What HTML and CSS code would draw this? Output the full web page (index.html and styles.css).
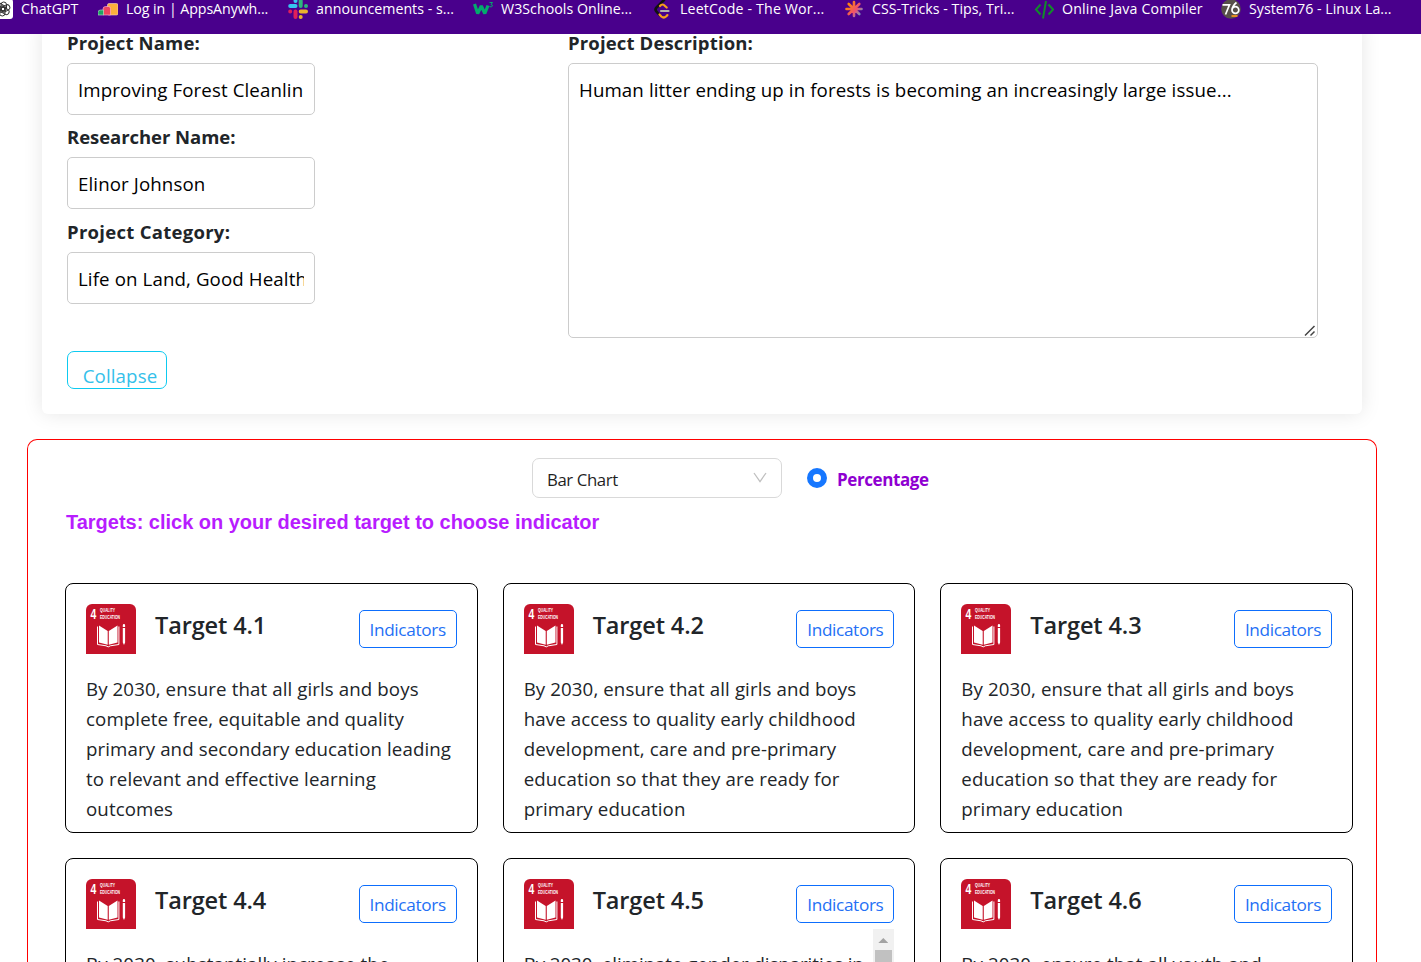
FILE: index.html
```html
<!DOCTYPE html>
<html lang="en">
<head>
<meta charset="utf-8">
<title>Project Targets</title>
<link rel="stylesheet" href="styles.css">
</head>
<body>
<svg class="defs" width="0" height="0" aria-hidden="true">
  <symbol id="sdg4" viewBox="0 0 50 50">
    <path fill="#c5132a" d="M0 50V6a6 6 0 0 1 6-6h38a6 6 0 0 1 6 6v44z"/>
    <text x="4.600" y="14.600" font-size="14.500" font-weight="700" fill="#fff" textLength="5.800" lengthAdjust="spacingAndGlyphs">4</text>
    <text x="14" y="8.300" font-size="6.200" font-weight="700" fill="#fff" textLength="15" lengthAdjust="spacingAndGlyphs">QUALITY</text>
    <text x="14" y="14.500" font-size="6.200" font-weight="700" fill="#fff" textLength="20" lengthAdjust="spacingAndGlyphs">EDUCATION</text>
    <path fill="#fff" d="M13 21.500l8.700 5.500v13.700l-8.700-2.200zM31.500 21.500L22.800 27v13.700l8.700-2.200z"/>
    <path fill="none" stroke="#fff" stroke-width="1" d="M11.500 22.500v18l8.500 1.300 2.200 1.100 2.200-1.100 8.500-1.300v-18"/>
    <path fill="#fff" d="M36.800 24h2.300v14.500l-1.100 2.500-1.200-2.500zM36.800 21.200a1.100 1.100 0 0 1 2.300 0V23h-2.300z"/>
  </symbol>
</svg>

<nav class="bookmarks">
  <a class="bookmark"><svg class="fav" viewBox="0 0 20 20"><rect y="-1" width="20" height="20" rx="3" fill="#fff"/><g fill="none" stroke="#333" stroke-width="1"><rect id="petal" x="8" y="2" width="5.500" height="9" rx="2.700"/><use href="#petal" transform="rotate(60 10 9)"/><use href="#petal" transform="rotate(120 10 9)"/><use href="#petal" transform="rotate(180 10 9)"/><use href="#petal" transform="rotate(240 10 9)"/><use href="#petal" transform="rotate(300 10 9)"/></g></svg><span class="w57">ChatGPT</span></a>
  <a class="bookmark"><svg class="fav" viewBox="0 0 20 20"><rect x="9.500" y="3.500" width="10.500" height="11.500" rx="1.500" fill="#fbb03b" stroke="#f8d9c5" stroke-width=".6"/><path d="M5 15V9q0-2.500 2.500-2.500h3q2 0 2 2V15z" fill="#f0455f" stroke="#fbd" stroke-width=".6"/><path d="M0 15v-2.500Q0 10 2.500 10h3v5z" fill="#1fa463" stroke="#bde5cc" stroke-width=".6"/></svg><span class="w142 narrow">Log in | AppsAnywh...</span></a>
  <a class="bookmark"><svg class="fav" viewBox="0 0 20 20"><g stroke-width="4" stroke-linecap="round"><path stroke="#36c5f0" d="M2.200 6h5.300M7.500 1v.01"/><path stroke="#2eb67d" d="M12.700 1v5M18 6v.01"/><path stroke="#ecb22e" d="M12.700 11.500H18M12.700 17v.01"/><path stroke="#e01e5a" d="M7.500 11.500V17M2.200 11.500v.01"/></g></svg><span class="w137">announcements - s...</span></a>
  <a class="bookmark"><svg class="fav" viewBox="0 0 20 20"><path fill="none" stroke="#04aa6d" stroke-width="3.200" stroke-linejoin="bevel" d="M1.500 4l3.200 9.500 3.600-7.500 3.500 7.500 3.200-8"/><path fill="none" stroke="#04aa6d" d="M16.500 2.500h3l-1.500 2q2 .3 1.300 1.700-.8 1.200-2.800.4"/></svg><span class="w131">W3Schools Online...</span></a>
  <a class="bookmark"><svg class="fav" viewBox="0 0 20 20"><path fill="none" stroke="#111" stroke-width="2.600" stroke-linecap="round" d="M12 0L4.500 7.500q-2 2 0 4.200l3 3.300"/><path fill="none" stroke="#f89f1b" stroke-width="2.200" stroke-linecap="round" d="M8 6q2.500-3 5 0l1.700 1.500M7.500 14.500l1.800 2q2.500 2 4.700 0l1.400-1.400"/><path stroke="#b3b1b0" stroke-width="2.200" stroke-linecap="round" d="M9 11h7.500"/></svg><span class="w143 roomy">LeetCode - The Wor...</span></a>
  <a class="bookmark"><svg class="fav" viewBox="0 0 20 20"><defs><linearGradient id="star" gradientUnits="userSpaceOnUse" x1="3" y1="4" x2="18" y2="16"><stop stop-color="#ff8a00"/><stop offset=".55" stop-color="#f0506e"/><stop offset="1" stop-color="#4aa8d8"/></linearGradient></defs><path fill="none" stroke="url(#star)" stroke-width="2.600" stroke-linecap="round" d="M10 2v14M2.500 9.010L17.500 9M4.700 4l10.600 10M15.300 4L4.700 14"/></svg><span class="w142">CSS-Tricks - Tips, Tri...</span></a>
  <a class="bookmark"><svg class="fav" viewBox="0 0 20 20"><path fill="none" stroke="#128a2c" stroke-width="2" d="M6.500 4.500L2 9.500l4.500 5M14.500 4.500l4.500 5-4.500 5M12 1L9 18.500"/></svg><span class="w139 roomy">Online Java Compiler</span></a>
  <a class="bookmark"><svg class="fav" viewBox="0 0 20 20"><circle cx="10" cy="9" r="9.800" fill="#574f4a"/><path stroke="#f7941d" stroke-width="1.800" d="M10.500 16h6"/><path fill="none" stroke="#fff" stroke-width="1.700" d="M1.500 4.800h7L4.500 14.500M15.500 2.500q-4 3-4.500 7.500M17.800 10a3.400 3.400 0 1 1-6.800 0a3.400 3.400 0 1 1 6.800 0"/></svg><span class="w142">System76 - Linux La...</span></a>
</nav>

<section class="panel">
  <div class="fields">
    <div class="field"><label class="label">Project Name:</label><div class="input"><span class="clip">Improving Forest Cleanlin</span></div></div>
    <div class="field"><label class="label tight">Researcher Name:</label><div class="input"><span class="clip">Elinor Johnson</span></div></div>
    <div class="field last"><label class="label wide">Project Category:</label><div class="input"><span class="clip">Life on Land, Good Health</span></div></div>
    <button class="collapse">Collapse</button>
  </div>
  <div class="field">
    <label class="label">Project Description:</label>
    <div class="textarea">Human litter ending up in forests is becoming an increasingly large issue...
      <svg class="grip" viewBox="0 0 12 12"><path stroke="#444" stroke-width="1.500" d="M1 10.500L10.500 1M6.500 10.500L10.500 6.500"/></svg>
    </div>
  </div>
</section>

<section class="results">
  <div class="controls">
    <div class="select"><span>Bar Chart</span><svg class="chevron" viewBox="0 0 14 12"><path fill="none" stroke="#bfbfbf" stroke-width="1.300" d="M1 1l6 8.500L13 1"/></svg></div>
    <span class="radio"></span><span class="percentage">Percentage</span>
  </div>
  <h2 class="heading">Targets: click on your desired target to choose indicator</h2>
  <div class="cards">
    <article class="card"><header class="card-head"><svg class="sdg"><use href="#sdg4"/></svg><h3>Target 4.1</h3><button class="indicators">Indicators</button></header>
      <p>By 2030, ensure that all girls and boys<br>complete free, equitable and quality<br>primary and secondary education leading<br>to relevant and effective learning<br>outcomes</p></article>
    <article class="card"><header class="card-head"><svg class="sdg"><use href="#sdg4"/></svg><h3>Target 4.2</h3><button class="indicators">Indicators</button></header>
      <p>By 2030, ensure that all girls and boys<br>have access to quality early childhood<br>development, care and pre-primary<br>education so that they are ready for<br>primary education</p></article>
    <article class="card"><header class="card-head"><svg class="sdg"><use href="#sdg4"/></svg><h3>Target 4.3</h3><button class="indicators">Indicators</button></header>
      <p>By 2030, ensure that all girls and boys<br>have access to quality early childhood<br>development, care and pre-primary<br>education so that they are ready for<br>primary education</p></article>
    <article class="card"><header class="card-head"><svg class="sdg"><use href="#sdg4"/></svg><h3>Target 4.4</h3><button class="indicators">Indicators</button></header>
      <p>By 2030, substantially increase the</p></article>
    <article class="card"><header class="card-head"><svg class="sdg"><use href="#sdg4"/></svg><h3>Target 4.5</h3><button class="indicators">Indicators</button></header>
      <p class="snug">By 2030, eliminate gender disparities in</p>
      <div class="scrollbar"><i class="up"></i><i class="thumb"></i></div></article>
    <article class="card"><header class="card-head"><svg class="sdg"><use href="#sdg4"/></svg><h3>Target 4.6</h3><button class="indicators">Indicators</button></header>
      <p>By 2030, ensure that all youth and</p></article>
  </div>
</section>
</body>
</html>
```
FILE: styles.css
```css
* { box-sizing: border-box; }
html, body { height: 962px; overflow: hidden; }
body {
  margin: 0;
  background: #fff;
  color: #212529;
  font-family: "Open Sans", "Noto Sans", sans-serif;
  font-size: 18.7px;
  letter-spacing: 0.11px;
}
.defs { position: absolute; }
#sdg4 text { font-family: "Liberation Sans", sans-serif; letter-spacing: 0; }

.bookmarks {
  position: relative;
  z-index: 1;
  display: flex;
  gap: 20px;
  height: 34px;
  padding-right: 10px;
  background: #49008c;
  color: #fff;
  font-size: 14.2px;
  overflow: hidden;
}
.bookmark { display: flex; gap: 8px; flex: none; white-space: nowrap; }
.bookmark:first-child { margin-left: -7px; }
.fav { width: 20px; height: 20px; flex: none; }
.bookmark span { line-height: 18px; letter-spacing: 0.03px; }
.bookmark .narrow { letter-spacing: -0.06px; }
.bookmark .roomy { letter-spacing: 0.15px; }
.w57 { width: 57px; }
.w131 { width: 131px; }
.w137 { width: 137px; }
.w139 { width: 139px; }
.w142 { width: 142px; }
.w143 { width: 144px; }

.panel {
  display: grid;
  grid-template-columns: 248px 750px;
  column-gap: 253px;
  height: 390px;
  margin: -10px 59px 0 42px;
  padding: 10px 0 0 25px;
  border-radius: 6px;
  box-shadow: 0 0 20px rgba(0, 0, 0, 0.1);
}
.fields { display: flex; flex-direction: column; gap: 13px; align-items: flex-start; }
.last { margin-top: 1px; }
.label {
  display: block;
  height: 18px;
  margin-bottom: 11px;
  line-height: 18px;
  font-weight: 700;
  font-size: 18.5px;
  letter-spacing: 0.15px;
  white-space: nowrap;
}
.label.tight { letter-spacing: -0.05px; }
.label.wide { letter-spacing: 0.28px; }
.input, .textarea {
  border: 1px solid #ccc;
  border-radius: 5px;
  color: #000;
  white-space: nowrap;
}
.input { width: 248px; height: 52px; padding: 0 10px; line-height: 52px; }
.clip { display: block; overflow: hidden; }
.textarea { position: relative; width: 750px; height: 275px; padding: 11px 10px; line-height: 30px; }
.grip { position: absolute; right: 1px; bottom: 0; width: 12px; height: 12px; }
.collapse {
  width: 100px;
  height: 38px;
  margin-top: 34px;
  padding: 12px 0 0 6px;
  border: 1px solid #0dcaf0;
  border-radius: 7px;
  background: none;
  color: #34c0ea;
  font: inherit;
  letter-spacing: inherit;
  line-height: 24px;
}

.results {
  height: 523px;
  margin: 25px 44px 0 27px;
  padding: 18px 23px 0 37px;
  border: 1px solid #f00;
  border-bottom: 0;
  border-radius: 10px 10px 0 0;
}
.controls { display: flex; align-items: center; height: 40px; padding-left: 467px; font-size: 17px; }
.select {
  display: flex;
  align-items: center;
  justify-content: space-between;
  width: 250px;
  height: 40px;
  padding: 3px 14px 0;
  border: 1px solid #d9d9d9;
  border-radius: 7px;
  color: #1f1f1f;
  font-size: 16.8px;
  letter-spacing: -0.4px;
}
.chevron { width: 14px; height: 12px; margin-top: -3px; }
.radio { width: 20px; height: 20px; margin-left: 25px; border: 6px solid #1677ff; border-radius: 50%; }
.percentage { margin: 3px 0 0 10px; color: #8f00d1; font-weight: 700; letter-spacing: -0.4px; }
.heading {
  height: 30px;
  margin: 9px 0 46px 1px;
  color: #b81cff;
  font: 700 20px/30px "Liberation Sans", sans-serif;
  letter-spacing: -0.015px;
  white-space: nowrap;
}
.cards { display: grid; grid-template-columns: repeat(3, 1fr); grid-template-rows: 250px 79px; gap: 25px; }
.card { position: relative; height: 250px; padding: 20px; border: 1px solid #000; border-radius: 8px; }
.card-head { display: flex; height: 50px; }
.sdg { width: 50px; height: 50px; }
.card h3 { margin: 0 0 0 19px; font-size: 23.5px; line-height: 43px; font-weight: 600; letter-spacing: -0.12px; white-space: nowrap; }
.indicators {
  width: 98px;
  height: 38px;
  margin: 6px 0 0 auto;
  padding: 0;
  border: 1px solid #0d6efd;
  border-radius: 5px;
  background: none;
  color: #2470f5;
  font: inherit;
  font-size: 17.2px;
  letter-spacing: -0.35px;
}
.card p { margin: 20px 0 0; line-height: 30px; letter-spacing: 0.1px; white-space: nowrap; }
.card .snug { letter-spacing: -0.05px; }
.scrollbar { position: absolute; top: 70px; right: 20px; width: 21px; height: 160px; background: #f1f1f1; }
.up { display: block; width: 10px; height: 5px; margin: 9px 0 7px 5px; background: #a3a3a3; clip-path: polygon(50% 0, 100% 100%, 0 100%); }
.thumb { display: block; width: 17px; height: 90px; margin-left: 2px; background: #c1c1c1; }
```
